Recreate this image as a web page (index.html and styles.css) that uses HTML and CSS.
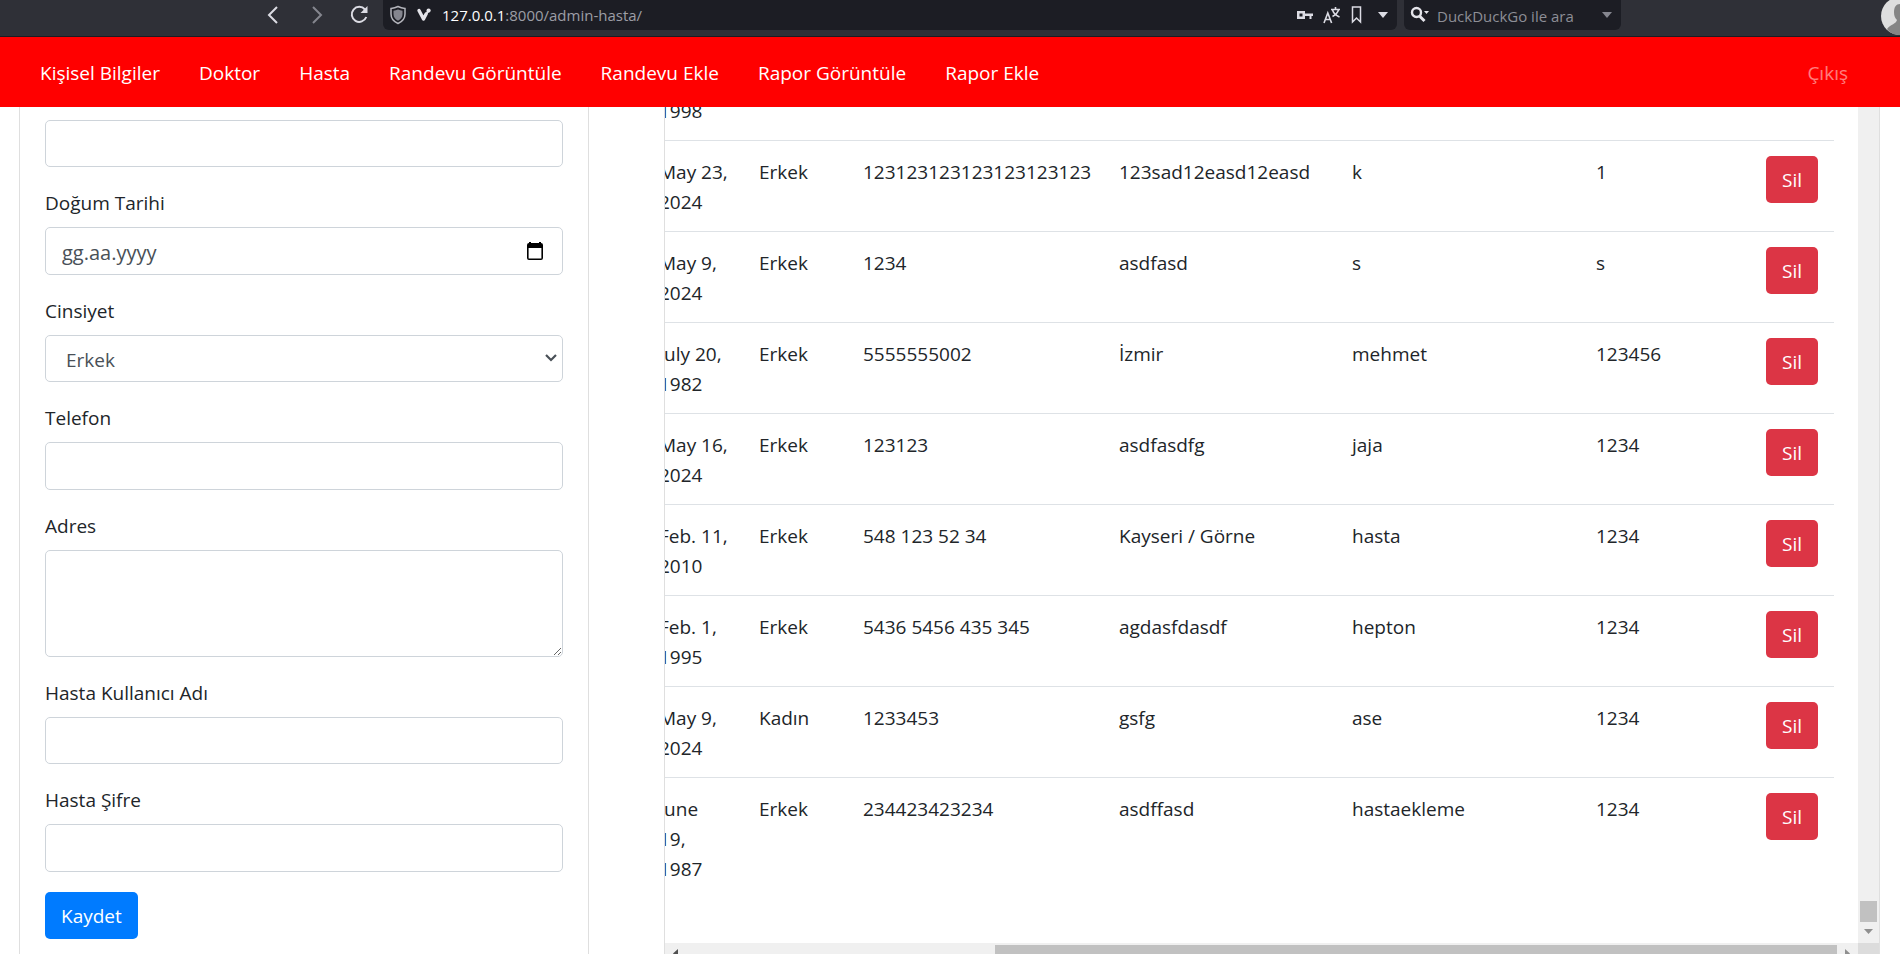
FILE: index.html
```
<!DOCTYPE html>
<html lang="tr">
<head>
<meta charset="utf-8">
<title>Hasta</title>
<link rel="stylesheet" href="styles.css">
</head>
<body>
<header class="browser">
  <div class="browser-nav">
    <button class="icon-btn" aria-label="Geri"><svg width="20" height="24" viewBox="0 0 20 24"><path d="M14 4 6 12l8 8" fill="none" stroke="#dcdce4" stroke-width="2"/></svg></button>
    <button class="icon-btn" aria-label="İleri"><svg width="20" height="24" viewBox="0 0 20 24"><path d="m7 4 8 8-8 8" fill="none" stroke="#85868f" stroke-width="2"/></svg></button>
    <button class="icon-btn" aria-label="Yenile"><svg width="22" height="24" viewBox="0 0 22 24"><path d="M16 6.500A7.500 7.500 0 1 0 17.300 14" fill="none" stroke="#dcdce4" stroke-width="2"/><path d="M18.500 3v7h-7z" fill="#dcdce4"/></svg></button>
  </div>
  <div class="address">
    <svg width="18" height="20" viewBox="0 0 18 20"><path d="M9 1.500c2.500 1.300 4.500 1.700 7 1.900V9c0 4.500-2.600 7.600-7 9.500C4.600 16.600 2 13.500 2 9V3.400c2.500-.2 4.500-.6 7-1.900z" fill="none" stroke="#b4b5bc" stroke-width="1.500"/><path d="M9 4.500c1.600.8 3 1.100 4.500 1.200V9c0 3.300-1.700 5.400-4.500 6.800C6.200 14.400 4.500 12.300 4.500 9V5.700C6 5.600 7.400 5.300 9 4.500z" fill="#85868f"/></svg>
    <svg width="16" height="16" viewBox="0 0 16 16"><path d="M3 3.500 7.500 12l2.600-5" fill="none" stroke="#e4e4ea" stroke-width="3.400" stroke-linecap="round" stroke-linejoin="round"/><circle cx="12.600" cy="3.600" r="2.100" fill="#e4e4ea"/><path d="m10 7.500 2.500-4" stroke="#e4e4ea" stroke-width="2"/></svg>
    <span class="url"><b>127.0.0.1</b>:8000/admin-hasta/</span>
    <svg width="18" height="18" viewBox="0 0 18 18"><path d="M1 5h8v2.500h8V10h-1.500v3h-2v-3H9v3H1zM3.500 7.500v3h3v-3z" fill="#dcdce4" fill-rule="evenodd"/></svg>
    <svg width="18" height="18" viewBox="0 0 18 18" fill="none" stroke="#dcdce4" stroke-width="1.600"><path d="M1 17 4.800 7l3.800 10M2.400 13.500h4.800M8 3.500h9M12.500 1v2.500M9.500 4c1 3 3.500 5.500 7 7M15.500 4c-1 3-3 5-6 6.500"/></svg>
    <svg width="14" height="20" viewBox="0 0 14 20"><path d="M2.500 2h8v15l-4-4-4 4z" fill="none" stroke="#dcdce4" stroke-width="1.500"/></svg>
    <svg width="12" height="10" viewBox="0 0 12 10"><path d="M1 2h10L6 8z" fill="#dcdce4"/></svg>
  </div>
  <div class="search">
    <svg width="20" height="20" viewBox="0 0 20 20"><circle cx="6.500" cy="7.500" r="4.500" fill="none" stroke="#e4e4ea" stroke-width="2.400"/><path d="m9.500 11 5 5" stroke="#e4e4ea" stroke-width="3"/><path d="M14 6h5l-2.500 3z" fill="#e4e4ea"/></svg>
    <input class="search-input" type="text" placeholder="DuckDuckGo ile ara" aria-label="Ara">
    <svg width="12" height="10" viewBox="0 0 12 10"><path d="M1 2h10L6 8z" fill="#85868f"/></svg>
  </div>
  <svg class="avatar" width="20" height="40" viewBox="0 0 20 40"><circle cx="20" cy="20" r="19" fill="#dedede"/><path d="M20 8c-4 0-6 3-6 8 0 4 1 6 3 8-1 4-6 4-10 9 4 5 8 6 13 6z" fill="#858585"/></svg>
</header>
<nav class="navbar">
  <a href="#">Kişisel Bilgiler</a>
  <a href="#">Doktor</a>
  <a href="#">Hasta</a>
  <a href="#">Randevu Görüntüle</a>
  <a href="#">Randevu Ekle</a>
  <a href="#">Rapor Görüntüle</a>
  <a href="#">Rapor Ekle</a>
  <a href="#" class="logout">Çıkış</a>
</nav>
<main class="content">
  <form class="card">
    <div class="group"><label for="soyad">Soyad</label><input class="control" id="soyad" type="text"></div>
    <div class="group"><label for="dogum">Doğum Tarihi</label>
      <div class="field"><input class="control tall date" id="dogum" type="text" placeholder="gg.aa.yyyy">
        <svg class="calendar" width="16" height="18" viewBox="0 0 16 18"><path d="M0 3q0-2 2-2V0h2v1h8V0h2v1q2 0 2 2v13q0 2-2 2H2q-2 0-2-2zM1.600 6v10.400h12.800V6z" fill="#000" fill-rule="evenodd"/></svg></div></div>
    <div class="group"><label for="cinsiyet">Cinsiyet</label>
      <div class="field"><select class="control" id="cinsiyet"><option>Erkek</option><option>Kadın</option></select>
        <svg class="chevron" width="12" height="10" viewBox="0 0 12 10"><path d="m1 2 5 5 5-5" fill="none" stroke="#495057" stroke-width="2.200"/></svg></div></div>
    <div class="group"><label for="telefon">Telefon</label><input class="control tall" id="telefon" type="tel"></div>
    <div class="group"><label for="adres">Adres</label><textarea class="control area" id="adres"></textarea></div>
    <div class="group"><label for="kullanici">Hasta Kullanıcı Adı</label><input class="control" id="kullanici" type="text"></div>
    <div class="group"><label for="sifre">Hasta Şifre</label><input class="control tall" id="sifre" type="password"></div>
    <button class="btn btn-primary" type="button">Kaydet</button>
  </form>
  <section class="pane">
    <div class="viewport">
      <table class="patients">
        <colgroup><col class="c-date"><col class="c-gender"><col class="c-phone"><col class="c-address"><col class="c-user"><col class="c-pass"><col class="c-action"></colgroup>
        <tbody>
          <tr><td>May 9, 1998</td><td></td><td></td><td></td><td></td><td></td><td></td></tr>
          <tr><td>May 23, 2024</td><td>Erkek</td><td>123123123123123123123</td><td>123sad12easd12easd</td><td>k</td><td>1</td><td><button class="btn btn-danger">Sil</button></td></tr>
          <tr><td>May 9, 2024</td><td>Erkek</td><td>1234</td><td>asdfasd</td><td>s</td><td>s</td><td><button class="btn btn-danger">Sil</button></td></tr>
          <tr><td>July 20, 1982</td><td>Erkek</td><td>5555555002</td><td>İzmir</td><td>mehmet</td><td>123456</td><td><button class="btn btn-danger">Sil</button></td></tr>
          <tr><td>May 16, 2024</td><td>Erkek</td><td>123123</td><td>asdfasdfg</td><td>jaja</td><td>1234</td><td><button class="btn btn-danger">Sil</button></td></tr>
          <tr><td>Feb. 11, 2010</td><td>Erkek</td><td>548 123 52 34</td><td>Kayseri / Görne</td><td>hasta</td><td>1234</td><td><button class="btn btn-danger">Sil</button></td></tr>
          <tr><td>Feb. 1, 1995</td><td>Erkek</td><td>5436 5456 435 345</td><td>agdasfdasdf</td><td>hepton</td><td>1234</td><td><button class="btn btn-danger">Sil</button></td></tr>
          <tr><td>May 9, 2024</td><td>Kadın</td><td>1233453</td><td>gsfg</td><td>ase</td><td>1234</td><td><button class="btn btn-danger">Sil</button></td></tr>
          <tr><td>June 19, 1987</td><td>Erkek</td><td>234423423234</td><td>asdffasd</td><td>hastaekleme</td><td>1234</td><td><button class="btn btn-danger">Sil</button></td></tr>
        </tbody>
      </table>
    </div>
    <div class="vbar"><span class="vthumb"></span><svg width="21" height="21" viewBox="0 0 21 21"><path d="M6 7h9l-4.500 5z" fill="#8f8f8f"/></svg></div>
    <div class="hbar"><svg width="21" height="21" viewBox="0 0 21 21"><path d="M13 6v9l-5-4.500z" fill="#505050"/></svg><span class="hspace"></span><span class="hthumb"></span><svg width="21" height="21" viewBox="0 0 21 21"><path d="M8 6v9l5-4.500z" fill="#8f8f8f"/></svg></div>
    <div class="corner"></div>
  </section>
</main>
</body>
</html>
```
FILE: styles.css
```
* { box-sizing: border-box; }
body {
  margin: 0;
  height: 100vh;
  overflow: hidden;
  display: flex;
  flex-direction: column;
  background: #fff;
  color: #212529;
  font: 19px/30px "Open Sans", "Noto Sans", sans-serif;
}
svg { display: block; flex: none; }
button, input, select, textarea { font: inherit; }

/* Browser toolbar */
.browser {
  flex: none;
  height: 37px;
  display: flex;
  align-items: flex-start;
  background: #2f3037;
  border-bottom: 1px solid #1c1c22;
  padding-left: 263px;
  font-size: 15px;
}
.browser-nav { display: flex; gap: 23px; padding-top: 3px; }
.icon-btn { background: none; border: 0; padding: 0; }
.address, .search {
  height: 30px;
  display: flex;
  align-items: center;
  background: #1c1d24;
  border-radius: 0 0 6px 6px;
}
.address { flex: 1; margin-left: 12px; padding: 0 8px 0 6px; gap: 9px; }
.url { flex: 1; margin-left: 1px; color: #9d9ea6; line-height: 32px; }
.url b { font-weight: 400; color: #fff; }
.address svg:last-child { margin-left: 4px; }
.search { width: 217px; margin-left: 7px; padding: 0 8px 0 6px; gap: 7px; }
.search-input {
  flex: 1;
  min-width: 0;
  background: none;
  border: 0;
  padding: 2px 0 0;
}
.search-input::placeholder { color: #8d8e96; opacity: 1; }
.avatar { margin: -4px 0 0 259px; height: 40px; }

/* Site navigation */
.navbar {
  flex: none;
  position: relative;
  z-index: 1;
  height: 70px;
  display: flex;
  align-items: center;
  gap: 39px;
  padding: 2px 52px 0 40px;
  background: #f00;
}
.navbar a { color: #fff; text-decoration: none; }
.navbar .logout { margin-left: auto; color: rgba(255, 255, 255, .5); }

/* Page body, scrolled under the navigation */
.content {
  flex: 1;
  min-height: 0;
  margin: -27px 0 -10px;
  padding: 0 20px 0 19px;
  display: grid;
  grid-template-columns: 570fr 1216fr;
  grid-template-rows: 100%;
  gap: 75px;
}
.card {
  border: solid #dfdfdf;
  border-width: 0 1px;
  padding: 0 25px;
}
.group { margin-bottom: 20px; }
.group label { display: block; padding-top: 1px; margin-bottom: 9px; }
.control {
  display: block;
  width: 100%;
  height: 47px;
  padding: 8px 15px 6px;
  background: #fff;
  color: #495057;
  border: 1px solid #ced4da;
  border-radius: 5px;
}
.tall { height: 48px; }
.date { padding-left: 16px; font-size: 20px; }
.area { height: 107px; resize: vertical; }
select.control { appearance: none; padding: 8px 20px 6px; }
.control::placeholder { color: #495057; opacity: 1; }
.field { position: relative; }
.calendar { position: absolute; right: 20px; top: 15px; }
.chevron { position: absolute; right: 6px; top: 18px; }

.btn {
  height: 47px;
  padding: 1px 16px 0;
  border: 0;
  border-radius: 5px;
  color: #fff;
  display: block;
}
.btn-primary { background: #007bff; }
.btn-danger { background: #dc3545; }

.pane {
  display: grid;
  grid-template-columns: minmax(0, 1fr) 21px;
  grid-template-rows: minmax(0, 1fr) 21px;
  border: solid #dfdfdf;
  border-width: 0 1px;
}
.viewport {
  overflow: hidden;
  display: flex;
  justify-content: flex-end;
  align-items: flex-end;
  padding: 0 24px 45px 0;
}
.patients {
  flex: none;
  width: 1190px;
  table-layout: fixed;
  border-collapse: collapse;
}
.patients td {
  padding: 16px 15px 14px;
  border-top: 1px solid #dee2e6;
  vertical-align: top;
}
.patients td:last-child { padding: 15px 15px 0; }
.c-date { width: 100px; }
.c-gender { width: 104px; }
.c-phone { width: 256px; }
.c-address { width: 233px; }
.c-user { width: 244px; }
.c-pass { width: 170px; }
.c-action { width: 83px; }

.vbar {
  display: flex;
  flex-direction: column;
  align-items: center;
  justify-content: flex-end;
  background: #f0f0f0;
}
.vthumb { width: 17px; height: 21px; background: #c1c1c1; }
.hbar { display: flex; align-items: center; background: #f0f0f0; }
.hspace { flex: 309; }
.hthumb { flex: 842; height: 17px; background: #c1c1c1; }
.corner { background: #dcdcdc; }
```
